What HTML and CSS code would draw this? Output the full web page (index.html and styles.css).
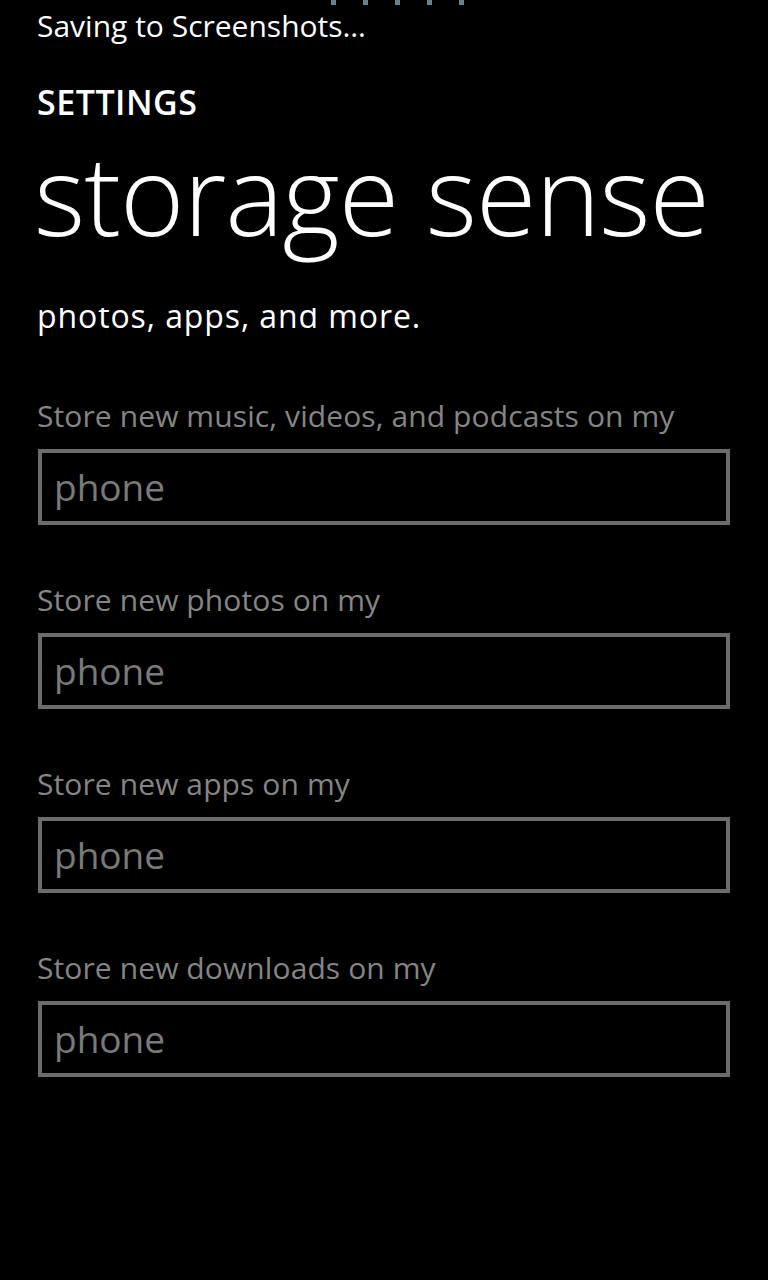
FILE: index.html
```html
<!DOCTYPE html>
<html lang="en">
<head>
  <meta charset="UTF-8" />
  <meta name="viewport" content="width=device-width, initial-scale=1" />
  <title>storage sense</title>
  <link rel="stylesheet" href="styles.css">
</head>

<body>
  <!-- Status bar dots -->
  <div class="status-dots">
    <span></span><span></span><span></span><span></span><span></span>
  </div>

  <p class="toast">Saving to Screenshots…</p>

  <header>
    <h2 class="app-title">SETTINGS</h2>
    <h1 class="page-title">storage sense</h1>
  </header>

  <!-- Intro text, scrolled so its top is cut off -->
  <div class="intro">
    <p>photos, apps, and more.</p>
  </div>

  <section class="options">
    <div class="option">
      <label>Store new music, videos, and podcasts on my</label>
      <div class="picker">phone</div>
    </div>
    <div class="option">
      <label>Store new photos on my</label>
      <div class="picker">phone</div>
    </div>
    <div class="option">
      <label>Store new apps on my</label>
      <div class="picker">phone</div>
    </div>
    <div class="option">
      <label>Store new downloads on my</label>
      <div class="picker">phone</div>
    </div>
  </section>
</body>
</html>
```

FILE: styles.css
```css
/* Base styles */
body {
  margin: 0;
  background: #000;
  color: #fff;
  font-family: 'Open Sans', 'Noto Sans', sans-serif;
  width: 768px;
  height: 1280px;
  overflow: hidden;
  position: relative;
}

/* Status bar dots */
.status-dots {
  position: absolute;
  top: 0;
  left: 331px;
  display: flex;
  gap: 27px;
}

.status-dots span {
  width: 5px;
  height: 5px;
  background: #6e7f94;
}

/* Toast */
.toast {
  margin: 0;
  padding: 6px 0 0 37px;
  font-size: 30px;
  line-height: 40px;
}

/* Headers */
header {
  padding: 39px 0 0 37px;
}

.app-title {
  margin: 0;
  font-size: 34px;
  font-weight: 600;
  line-height: 34px;
  letter-spacing: 0.5px;
}

.page-title {
  margin: 9px 0 0 -3px;
  font-size: 110px;
  font-weight: 300;
  line-height: 130px;
  letter-spacing: -1px;
}

/* Intro text */
.intro {
  height: 32px;
  margin-top: 50px;
  overflow: hidden;
  padding-left: 37px;
}

.intro p {
  margin: -12px 0 0;
  font-size: 32px;
  line-height: 40px;
  letter-spacing: 0.9px;
}

/* Options */
.options {
  padding: 56px 38px 0 38px;
  display: flex;
  flex-direction: column;
  gap: 55px;
}

.option label {
  display: block;
  margin-left: -1px;
  font-size: 30px;
  line-height: 40px;
  letter-spacing: 0.1px;
  color: #858585;
}

.picker {
  box-sizing: border-box;
  height: 76px;
  margin-top: 13px;
  border: 4px solid #6b6b6b;
  padding-left: 12px;
  font-size: 37px;
  line-height: 68px;
  color: #7a7a7a;
}
```
